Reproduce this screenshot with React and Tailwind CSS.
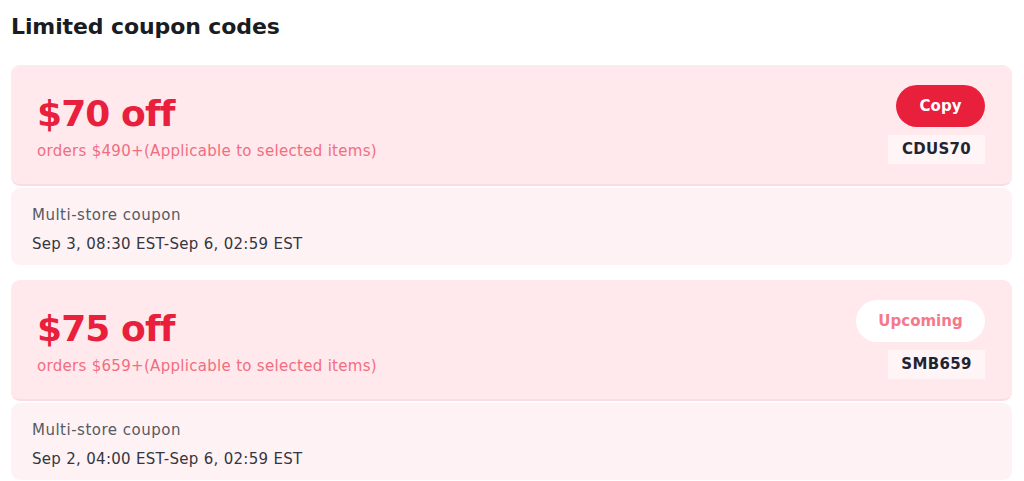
import React from "react";

const coupons = [
  {
    amount: "$70 off",
    condition: "orders $490+(Applicable to selected items)",
    code: "CDUS70",
    status: "copy",
    type: "Multi-store coupon",
    period: "Sep 3, 08:30 EST-Sep 6, 02:59 EST",
  },
  {
    amount: "$75 off",
    condition: "orders $659+(Applicable to selected items)",
    code: "SMB659",
    status: "upcoming",
    type: "Multi-store coupon",
    period: "Sep 2, 04:00 EST-Sep 6, 02:59 EST",
  },
];

function CouponCard({ coupon }) {
  return (
    <div className="flex flex-col gap-[2px]">
      {/* Top */}
      <div className="flex h-[121px] items-center justify-between rounded-[9px] border-b-2 border-[#fcdbe2] bg-[#ffe9ed] pl-[26px] pr-[27px]">
        <div className="flex flex-col pt-[3px]">
          <span className="text-[36px] font-bold leading-[46px] tracking-[-0.9px] text-[#e8203c]">
            {coupon.amount}
          </span>
          <span className="mt-[4px] text-[15px] leading-[20px] tracking-[0.3px] text-[#f26d80]">
            {coupon.condition}
          </span>
        </div>
        <div className="flex flex-col items-end gap-[8px]">
          {coupon.status === "copy" ? (
            <button className="h-[42px] w-[89px] rounded-full bg-[#e8203c] text-[15px] font-bold text-white">
              Copy
            </button>
          ) : (
            <button className="h-[42px] w-[129px] rounded-full bg-white text-[15px] font-bold text-[#f4798a]">
              Upcoming
            </button>
          )}
          <div className="flex h-[29px] w-[97px] items-center justify-center bg-[#fff5f7] text-[15px] font-bold tracking-[0.3px] text-[#1f2430]">
            {coupon.code}
          </div>
        </div>
      </div>
      {/* Bottom */}
      <div className="flex h-[77px] flex-col justify-center rounded-[9px] bg-[#fff2f5] pl-[21px] pt-[6px]">
        <span className="text-[15px] leading-[29px] tracking-[0.5px] text-[#555a63]">
          {coupon.type}
        </span>
        <span className="text-[15px] leading-[29px] tracking-[0.3px] text-[#333740]">
          {coupon.period}
        </span>
      </div>
    </div>
  );
}

export default function App() {
  return (
    <div
      className="min-h-screen bg-white px-[11px] pt-[13px]"
      style={{ fontFamily: "'DejaVu Sans', 'Open Sans', sans-serif" }}
    >
      <h1 className="mb-[24px] text-[22px] font-bold leading-[28px] tracking-[-0.1px] text-[#191c22]">
        Limited coupon codes
      </h1>
      <div className="flex w-[1001px] flex-col gap-[15px]">
        {coupons.map((c) => (
          <CouponCard key={c.code} coupon={c} />
        ))}
      </div>
    </div>
  );
}
